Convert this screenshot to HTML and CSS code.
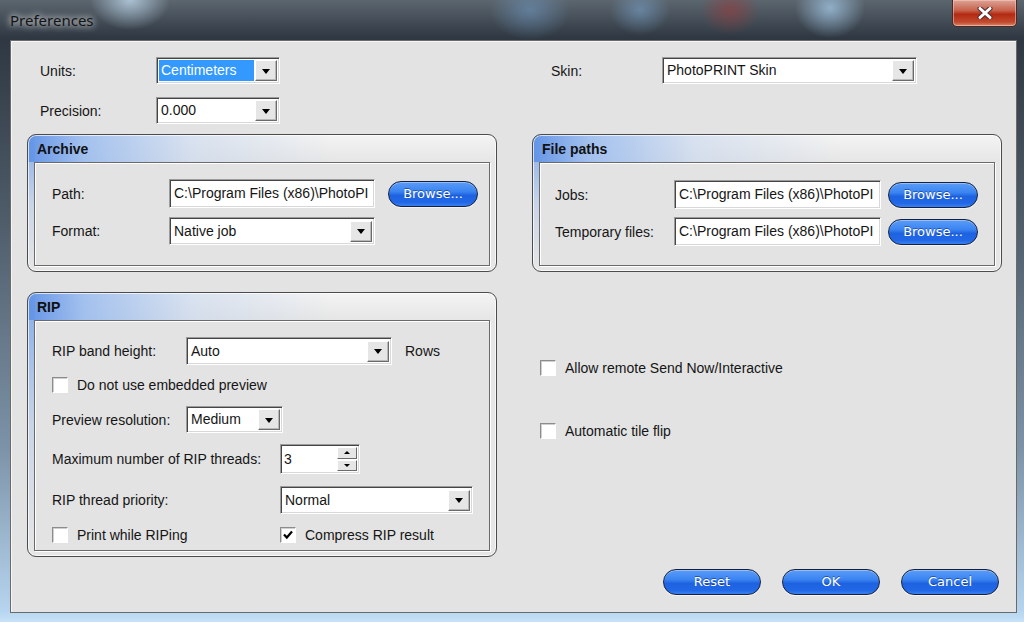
FILE: index.html
```html
<!DOCTYPE html>
<html>
<head>
<meta charset="utf-8">
<title>Preferences</title>
<link rel="stylesheet" href="styles.css">
</head>
<body>
<div class="window">
  <div class="titlebar">
    <span class="title">Preferences</span>
    <div class="close">
      <svg width="18" height="12" viewBox="0 0 18 12">
        <path d="M4 1.5 L14 10.5 M14 1.5 L4 10.5" stroke="#4a3030" stroke-width="5" stroke-linecap="round"/>
        <path d="M4 1.5 L14 10.5 M14 1.5 L4 10.5" stroke="#ffffff" stroke-width="3" stroke-linecap="round"/>
      </svg>
    </div>
  </div>
  <div class="client">
    <div class="row top-row">
      <div class="col">
        <div class="fields">
          <div class="field">
            <span class="lbl lbl-units">Units:</span>
            <div class="combo combo-units"><span class="val sel">Centimeters</span><span class="arrow"></span></div>
          </div>
          <div class="field">
            <span class="lbl lbl-units">Precision:</span>
            <div class="combo combo-units"><span class="val">0.000</span><span class="arrow"></span></div>
          </div>
        </div>
      </div>
      <div class="col">
        <div class="fields fields-skin">
          <div class="field">
            <span class="lbl lbl-skin">Skin:</span>
            <div class="combo combo-skin"><span class="val">PhotoPRINT Skin</span><span class="arrow"></span></div>
          </div>
        </div>
      </div>
    </div>

    <div class="row groups-row">
      <div class="group group-short">
        <div class="group-head">Archive</div>
        <div class="inner inner-archive">
          <div class="field field-path">
            <span class="lbl lbl-archive">Path:</span>
            <div class="text">C:\Program Files (x86)\PhotoPI</div>
            <div class="btn btn-browse btn-gap13">Browse...</div>
          </div>
          <div class="field">
            <span class="lbl lbl-archive">Format:</span>
            <div class="combo combo-wide"><span class="val">Native job</span><span class="arrow"></span></div>
          </div>
        </div>
      </div>
      <div class="group group-short">
        <div class="group-head">File paths</div>
        <div class="inner inner-paths">
          <div class="field field-jobs">
            <span class="lbl lbl-paths">Jobs:</span>
            <div class="text">C:\Program Files (x86)\PhotoPI</div>
            <div class="btn btn-browse btn-gap7">Browse...</div>
          </div>
          <div class="field">
            <span class="lbl lbl-paths">Temporary files:</span>
            <div class="text">C:\Program Files (x86)\PhotoPI</div>
            <div class="btn btn-browse btn-gap7">Browse...</div>
          </div>
        </div>
      </div>
    </div>

    <div class="row rip-row">
      <div class="group group-rip">
        <div class="group-head">RIP</div>
        <div class="inner inner-rip">
          <div class="field">
            <span class="lbl lbl-rip">RIP band height:</span>
            <div class="combo combo-wide"><span class="val">Auto</span><span class="arrow"></span></div>
            <span class="unit">Rows</span>
          </div>
          <label class="check check-gap12"><span class="cb"></span><span>Do not use embedded preview</span></label>
          <div class="field field-gap13">
            <span class="lbl lbl-rip">Preview resolution:</span>
            <div class="combo combo-res"><span class="val">Medium</span><span class="arrow"></span></div>
          </div>
          <div class="field field-gap11">
            <span class="lbl lbl-threads">Maximum number of RIP threads:</span>
            <div class="spin">
              <span class="spin-val">3</span>
              <span class="spin-btns">
                <span class="spin-btn"><span class="tri-up"></span></span>
                <span class="spin-btn"><span class="tri-down"></span></span>
              </span>
            </div>
          </div>
          <div class="field field-gap12">
            <span class="lbl lbl-threads">RIP thread priority:</span>
            <div class="combo combo-prio"><span class="val">Normal</span><span class="arrow"></span></div>
          </div>
          <div class="checks-row">
            <label class="check check-half"><span class="cb"></span><span>Print while RIPing</span></label>
            <label class="check"><span class="cb checked"><svg width="12" height="12" viewBox="0 0 12 12"><path d="M2 5.5 L4.8 8.5 L10 2.5" fill="none" stroke="#000" stroke-width="2.2"/></svg></span><span>Compress RIP result</span></label>
          </div>
        </div>
      </div>
      <div class="col options">
        <label class="check opt-first"><span class="cb"></span><span>Allow remote Send Now/Interactive</span></label>
        <label class="check opt-second"><span class="cb"></span><span>Automatic tile flip</span></label>
      </div>
    </div>

    <div class="footer">
      <div class="btn btn-foot">Reset</div>
      <div class="btn btn-foot">OK</div>
      <div class="btn btn-foot">Cancel</div>
    </div>
  </div>
</div>
</body>
</html>
```

FILE: styles.css
```css
* { box-sizing: border-box; }
html, body { margin: 0; padding: 0; width: 1024px; height: 622px; overflow: hidden; }
body {
  font-family: "Liberation Sans", Arial, sans-serif;
  font-size: 14px;
  color: #151515;
}

.window {
  width: 1024px;
  height: 622px;
  display: flex;
  flex-direction: column;
  background:
    radial-gradient(ellipse 40px 30px at 130px 0px, rgba(190,215,235,0.8), rgba(190,215,235,0)),
    radial-gradient(ellipse 40px 30px at 530px 10px, rgba(110,150,190,0.6), rgba(110,150,190,0)),
    radial-gradient(ellipse 30px 25px at 640px 10px, rgba(120,160,200,0.6), rgba(120,160,200,0)),
    radial-gradient(ellipse 30px 25px at 730px 10px, rgba(150,60,60,0.6), rgba(150,60,60,0)),
    radial-gradient(ellipse 35px 30px at 830px 8px, rgba(160,195,225,0.8), rgba(160,195,225,0)),
    linear-gradient(180deg, #5c666f 0px, #2f3842 38px, #4b5865 200px, #7d93a8 450px, #b6d4ef 610px, #c8e2f8 622px);
}

.titlebar {
  height: 40px;
  flex: none;
  display: flex;
  justify-content: space-between;
  align-items: flex-start;
  padding: 0 7px 0 10px;
}
.title {
  margin-top: 10px;
  line-height: 20px;
  font-family: "Noto Sans", "Open Sans", sans-serif;
  font-size: 15px;
  color: #141414;
  text-shadow: 0 0 6px rgba(255,255,255,0.9), 0 0 10px rgba(255,255,255,0.6);
}
.close {
  width: 65px;
  height: 27px;
  border: 1px solid #4a2a28;
  border-top: none;
  border-radius: 0 0 5px 5px;
  background: linear-gradient(180deg, #dca497 0%, #c8624c 40%, #b22a12 55%, #c24a2e 85%, #d88a6c 100%);
  display: flex;
  align-items: center;
  justify-content: center;
  box-shadow: inset 0 0 0 1px rgba(255,210,200,0.5);
}

.client {
  flex: 1;
  margin: 0 7px 9px 10px;
  border: 1px solid #6a6a6a;
  background: #e3e3e3;
  padding: 16px 14px 0 16px;
  box-shadow: inset 1px 1px 0 #f6f6f6;
}

.row { display: flex; gap: 35px; }
.col { width: 470px; }

.top-row { height: 67px; margin-bottom: 10px; }
.fields { padding-left: 13px; }
.fields-skin { padding-left: 19px; }
.field { display: flex; align-items: center; }
.fields .field + .field { margin-top: 13px; }

.lbl { flex: none; white-space: nowrap; }
.lbl-units { width: 116px; }
.lbl-skin { width: 111px; }
.lbl-archive { width: 117px; }
.lbl-paths { width: 119px; }
.lbl-rip { width: 134px; }
.lbl-threads { width: 228px; }

/* Combo box */
.combo {
  display: flex;
  align-items: center;
  height: 27px;
  background: #fff;
  border: 1px solid;
  border-color: #9c9c9c #ffffff #ffffff #9c9c9c;
  box-shadow: inset 1px 1px 0 #454545, inset -1px -1px 0 #d8d8d8;
  padding: 2px 2px 2px 2px;
  flex: none;
}
.combo .val {
  flex: 1;
  padding-left: 2px;
  white-space: nowrap;
  overflow: hidden;
  line-height: 21px;
  height: 21px;
}
.combo .val.sel { background: #3399ff; color: #fff; margin-right: 1px; }
.arrow {
  flex: none;
  width: 22px;
  height: 21px;
  background: #e6e6e6;
  border: 1px solid;
  border-color: #ffffff #6a6a6a #6a6a6a #ffffff;
  box-shadow: inset -1px -1px 0 #b8b8b8;
  display: flex;
  align-items: center;
  justify-content: center;
}
.arrow::after {
  content: "";
  width: 0; height: 0;
  border-left: 4px solid transparent;
  border-right: 4px solid transparent;
  border-top: 5px solid #000;
  margin-top: 1px;
}
.combo-units { width: 124px; }
.combo-skin { width: 255px; }
.combo-wide { width: 206px; height: 28px; }
.combo-res { width: 97px; }
.combo-prio { width: 193px; height: 28px; }

/* Text input */
.text {
  flex: none;
  width: 206px;
  height: 29px;
  background: #fff;
  border: 1px solid;
  border-color: #9c9c9c #ffffff #ffffff #9c9c9c;
  box-shadow: inset 1px 1px 0 #454545, inset -1px -1px 0 #d8d8d8;
  padding: 0 0 0 4px;
  line-height: 27px;
  white-space: nowrap;
  overflow: hidden;
}
.inner-paths .text { width: 207px; }

/* Buttons */
.btn {
  flex: none;
  height: 26px;
  border-radius: 13px;
  border: 1px solid #15203c;
  background: linear-gradient(180deg, #5b9cf6 0%, #3a84f2 40%, #1e62e0 56%, #2168e6 85%, #3b80f0 100%);
  box-shadow: inset 0 1px 0 rgba(255,255,255,0.35), 0 1px 0 rgba(255,255,255,0.6);
  color: #fff;
  font-family: "DejaVu Sans", Verdana, sans-serif;
  font-size: 13px;
  line-height: 24px;
  text-align: center;
  text-shadow: 0 -1px 0 rgba(10,30,90,0.5);
}
.btn-browse { width: 90px; }
.btn-gap13 { margin-left: 13px; }
.btn-gap7 { margin-left: 7px; }
.btn-foot { width: 98px; }

/* Groups */
.group {
  width: 470px;
  border: 1px solid #4c4c4c;
  border-radius: 9px;
  padding: 0 6px 5px 6px;
  display: flex;
  flex-direction: column;
  background:
    linear-gradient(90deg, rgba(95,145,230,0.95) 0%, rgba(150,185,238,0.85) 12%, rgba(200,215,238,0.6) 35%, rgba(228,230,234,0) 65%) 0 0 / 100% 27px no-repeat,
    linear-gradient(180deg, rgba(255,255,255,0.55) 0%, rgba(255,255,255,0) 100%) 0 0 / 100% 27px no-repeat,
    linear-gradient(180deg, rgba(120,165,235,0.9) 0%, rgba(180,200,232,0.6) 50%, rgba(227,227,227,0) 100%) 0 0 / 7px 100% no-repeat,
    #e6e6e6;
  box-shadow: inset 0 0 0 1px rgba(255,255,255,0.7);
}
.group-short { height: 138px; }
.group-rip { height: 265px; }
.group-head {
  flex: none;
  height: 27px;
  line-height: 28px;
  font-weight: bold;
  padding-left: 3px;
  color: #111;
}
.inner {
  flex: 1;
  border: 1px solid #6a6a6a;
  box-shadow: 1px 1px 0 #ffffff, inset 1px 1px 0 #ffffff;
  background: #e3e3e3;
}
.inner-archive { padding: 16px 0 0 17px; }
.inner-archive .field + .field { margin-top: 9px; }
.inner-paths { padding: 17px 0 0 15px; }
.inner-paths .field + .field { margin-top: 8px; }
.inner-rip { padding: 16px 0 0 17px; }

.groups-row { margin-bottom: 20px; }

.unit { margin-left: 13px; }

.field-gap13 { margin-top: 13px; }
.field-gap11 { margin-top: 11px; }
.field-gap12 { margin-top: 12px; }

/* Checkboxes */
.check {
  display: flex;
  align-items: center;
  height: 16px;
  white-space: nowrap;
}
.cb {
  flex: none;
  width: 16px;
  height: 16px;
  background: #fff;
  border: 1px solid;
  border-color: #8c8c8c #ffffff #ffffff #8c8c8c;
  box-shadow: inset 1px 1px 0 #cfcfcf;
  margin-right: 9px;
  display: flex;
  align-items: center;
  justify-content: center;
}
.check-gap12 { margin-top: 12px; }
.checks-row { display: flex; margin-top: 13px; }
.check-half { width: 228px; }

/* Spin */
.spin {
  flex: none;
  display: flex;
  width: 80px;
  height: 30px;
  background: #fff;
  border: 1px solid;
  border-color: #9c9c9c #ffffff #ffffff #9c9c9c;
  box-shadow: inset 1px 1px 0 #454545, inset -1px -1px 0 #d8d8d8;
  padding: 2px 2px 2px 3px;
}
.spin-val { flex: 1; line-height: 24px; }
.spin-btns { display: flex; flex-direction: column; gap: 1px; width: 20px; }
.spin-btn {
  height: 12px;
  background: #e6e6e6;
  border: 1px solid;
  border-color: #ffffff #6a6a6a #6a6a6a #ffffff;
  display: flex;
  align-items: center;
  justify-content: center;
}
.tri-up { width: 0; height: 0; border-left: 3px solid transparent; border-right: 3px solid transparent; border-bottom: 3px solid #000; }
.tri-down { width: 0; height: 0; border-left: 3px solid transparent; border-right: 3px solid transparent; border-top: 3px solid #000; }

/* Right options */
.options { padding-left: 8px; }
.opt-first { margin-top: 68px; }
.opt-second { margin-top: 47px; }

/* Footer */
.footer {
  display: flex;
  justify-content: flex-end;
  gap: 21px;
  margin-top: 12px;
  padding-right: 3px;
}
```
